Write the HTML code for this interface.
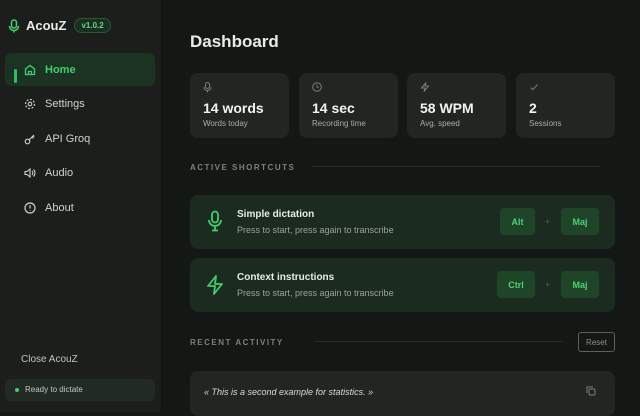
<!DOCTYPE html><html><head><style>
*{margin:0;padding:0;box-sizing:border-box}
body{width:640px;height:412px;overflow:hidden;background:#141814;font-family:"Liberation Sans",sans-serif;color:#e8ece8;position:relative}
.side{position:absolute;left:0;top:0;width:162px;height:412px;background:#1b1e1b;border-right:1px solid #111}
.logo{position:absolute;left:8px;top:18px;display:flex;align-items:center;font-weight:bold;font-size:13px}
.ver{margin-left:8px;border:1px solid #2b5a35;background:#183020;color:#6fd08a;font-size:8px;border-radius:8px;padding:2px 6px;font-weight:bold}
.nav{position:absolute;left:5px;width:150px;height:33px;display:flex;align-items:center;padding-left:19px;font-size:11px;color:#cfd4cf}
.nav svg{margin-right:9px}
.nav.act{background:#1b3323;color:#3fcf6a;font-weight:bold;border-radius:6px}
.nav.act:before{content:"";position:absolute;left:9px;top:16px;width:3px;height:14px;background:#2ec05c;border-radius:2px}
.card{position:absolute;background:#222622;border-radius:8px}
.sv{position:absolute;left:13px;top:27px;font-size:14px;font-weight:bold;color:#f2f2f2}
.sl{position:absolute;left:13px;top:46px;font-size:8px;color:#a8ada8}
.si{position:absolute;left:13px;top:9px}
.h{position:absolute;left:190px;font-size:8px;letter-spacing:1.5px;font-weight:bold;color:#7b817b}
.line{position:absolute;height:1px;background:#2a2e2a}
.sc{position:absolute;left:190px;width:425px;height:54px;background:#1b2b20;border-radius:8px}
.st{position:absolute;left:47px;top:14px;font-size:10px;font-weight:bold}
.ss{position:absolute;left:47px;top:30px;font-size:9px;color:#9aa39b}
.key{position:absolute;top:13px;height:27px;background:#1f4529;color:#4fd076;border-radius:4px;font-size:9px;font-weight:bold;display:flex;align-items:center;justify-content:center}
.plus{position:absolute;top:22px;font-size:8px;color:#4a6a50}
</style></head><body>
<div class="side">
<div class="logo"><svg width="12" height="14" viewBox="0 0 12 14" fill="none" stroke="#3fcf6a" stroke-width="1.6"><rect x="3.5" y="1" width="5" height="8" rx="2.5"/><path d="M1.5 7a4.5 4.5 0 0 0 9 0M6 11.5v2"/></svg><span style="margin-left:6px">AcouZ</span><span class="ver">v1.0.2</span></div>
<div class="nav act" style="top:53px"><svg width="12" height="12" viewBox="0 0 12 12" fill="none" stroke="#3fcf6a" stroke-width="1.3"><path d="M1.5 5L6 1.5 10.5 5v5.5h-9z"/><path d="M4.5 10.5V7.5h3v3"/></svg>Home</div>
<div class="nav" style="top:87px"><svg width="12" height="12" viewBox="0 0 12 12" fill="none" stroke="#cfd4cf" stroke-width="1.1"><circle cx="6" cy="6" r="1.8"/><circle cx="6" cy="6" r="4.5" stroke-dasharray="2 1.5"/></svg>Settings</div>
<div class="nav" style="top:122px"><svg width="12" height="12" viewBox="0 0 12 12" fill="none" stroke="#cfd4cf" stroke-width="1.1"><circle cx="3.5" cy="8.5" r="2.3"/><path d="M5.2 6.8L10 2M8 4l1.5 1.5M9.2 2.8l1 1"/></svg>API Groq</div>
<div class="nav" style="top:156px"><svg width="12" height="12" viewBox="0 0 12 12" fill="none" stroke="#cfd4cf" stroke-width="1.1"><path d="M1 4.5h2l3-2.5v8L3 7.5H1z"/><path d="M8 4a3 3 0 0 1 0 4M9.5 2.5a5 5 0 0 1 0 7"/></svg>Audio</div>
<div class="nav" style="top:191px"><svg width="12" height="12" viewBox="0 0 12 12" fill="none" stroke="#cfd4cf" stroke-width="1.2"><circle cx="6" cy="6" r="5"/><path d="M6 3.3v3.2M6 8.2v.5"/></svg>About</div>
<div style="position:absolute;left:21px;top:354px;font-size:10px;color:#bfc4bf">Close AcouZ</div>
<div style="position:absolute;left:5px;top:379px;width:150px;height:22px;background:#212a23;border-radius:5px;font-size:8px;color:#c3c8c3;padding:6px 0 0 20px"><span style="position:absolute;left:10px;top:9px;width:4px;height:4px;border-radius:50%;background:#3fcf6a"></span>Ready to dictate</div>
</div>
<div style="position:absolute;left:190px;top:32px;font-size:17px;font-weight:bold">Dashboard</div>
<div class="card" style="left:190px;top:73px;width:99px;height:65px"><svg class="si" width="9" height="11" viewBox="0 0 9 11" fill="none" stroke="#777d77"><rect x="2.5" y=".5" width="4" height="6" rx="2"/><path d="M1 5a3.5 3.5 0 0 0 7 0M4.5 8.5v2"/></svg><div class="sv">14 words</div><div class="sl">Words today</div></div>
<div class="card" style="left:299px;top:73px;width:99px;height:65px"><svg class="si" width="10" height="10" viewBox="0 0 10 10" fill="none" stroke="#777d77"><circle cx="5" cy="5" r="4.3"/><path d="M5 2.5V5l1.7 1"/></svg><div class="sv">14 sec</div><div class="sl">Recording time</div></div>
<div class="card" style="left:407px;top:73px;width:99px;height:65px"><svg class="si" width="10" height="10" viewBox="0 0 10 10" fill="none" stroke="#777d77"><path d="M6 .5L1.5 6h3.5L4 9.5 8.5 4H5z"/></svg><div class="sv">58 WPM</div><div class="sl">Avg. speed</div></div>
<div class="card" style="left:516px;top:73px;width:99px;height:65px"><svg class="si" width="10" height="10" viewBox="0 0 10 10" fill="none" stroke="#777d77"><path d="M1.5 5.5l2.3 2.3L8.5 2.5"/></svg><div class="sv">2</div><div class="sl">Sessions</div></div>
<div class="h" style="top:163px">ACTIVE SHORTCUTS</div><div class="line" style="left:312px;top:166px;width:288px"></div>
<div class="sc" style="top:195px"><svg style="position:absolute;left:17px;top:15px" width="16" height="22" viewBox="0 0 16 22" fill="none" stroke="#3fcf6a" stroke-width="1.8"><rect x="5" y="1.5" width="6" height="11" rx="3"/><path d="M2 10a6 6 0 0 0 12 0M8 16v4M5 20.5h6"/></svg><div class="st">Simple dictation</div><div class="ss">Press to start, press again to transcribe</div>
<div class="key" style="left:310px;width:35px">Alt</div><div class="plus" style="left:355px">+</div><div class="key" style="left:371px;width:38px">Maj</div></div>
<div class="sc" style="top:258px"><svg style="position:absolute;left:16px;top:17px" width="18" height="20" viewBox="0 0 18 20" fill="none" stroke="#3fcf6a" stroke-width="1.8" stroke-linejoin="round"><path d="M10 1L2 11h7l-1 8 8-10H9z"/></svg><div class="st">Context instructions</div><div class="ss">Press to start, press again to transcribe</div>
<div class="key" style="left:307px;width:38px">Ctrl</div><div class="plus" style="left:355px">+</div><div class="key" style="left:371px;width:38px">Maj</div></div>
<div class="h" style="top:338px">RECENT ACTIVITY</div><div class="line" style="left:315px;top:341px;width:248px"></div>
<div style="position:absolute;left:578px;top:332px;width:37px;height:20px;border:1px solid #5a605a;border-radius:3px;font-size:8px;color:#8a908a;display:flex;align-items:center;justify-content:center">Reset</div>
<div class="card" style="left:190px;top:371px;width:425px;height:45px"><div style="position:absolute;left:14px;top:16px;font-size:9px;font-style:italic;color:#d8dcd8">« This is a second example for statistics. »</div><svg style="position:absolute;left:396px;top:15px" width="10" height="10" viewBox="0 0 10 10" fill="none" stroke="#777d77"><rect x="3" y="3" width="6" height="6" rx="1"/><path d="M1 7V1h6"/></svg></div>
</body></html>
